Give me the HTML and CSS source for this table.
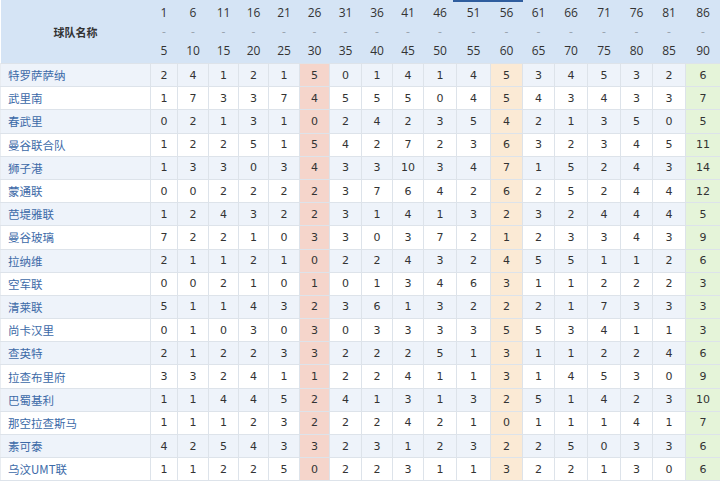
FILE: index.html
```html
<!DOCTYPE html>
<html lang="zh">
<head>
<meta charset="utf-8">
<link rel="stylesheet" href="styles.css">
</head>
<body>
<div class="wrap">
<div class="topbar"></div>
<table class="grid">
<colgroup>
<col class="c-name"><col style="width:27px"><col style="width:31px"><col style="width:30px"><col style="width:30px"><col style="width:31px"><col style="width:30px"><col style="width:32px"><col style="width:31px"><col style="width:31px"><col style="width:33px"><col style="width:34px"><col style="width:32px"><col style="width:32px"><col style="width:33px"><col style="width:33px"><col style="width:32px"><col style="width:33px"><col style="width:35px">
</colgroup>
<thead>
<tr>
<th class="hname">球队名称</th>
<th><span>1</span><i>-</i><span>5</span></th>
<th><span>6</span><i>-</i><span>10</span></th>
<th><span>11</span><i>-</i><span>15</span></th>
<th><span>16</span><i>-</i><span>20</span></th>
<th><span>21</span><i>-</i><span>25</span></th>
<th><span>26</span><i>-</i><span>30</span></th>
<th><span>31</span><i>-</i><span>35</span></th>
<th><span>36</span><i>-</i><span>40</span></th>
<th><span>41</span><i>-</i><span>45</span></th>
<th><span>46</span><i>-</i><span>50</span></th>
<th><span>51</span><i>-</i><span>55</span></th>
<th><span>56</span><i>-</i><span>60</span></th>
<th><span>61</span><i>-</i><span>65</span></th>
<th><span>66</span><i>-</i><span>70</span></th>
<th><span>71</span><i>-</i><span>75</span></th>
<th><span>76</span><i>-</i><span>80</span></th>
<th><span>81</span><i>-</i><span>85</span></th>
<th><span>86</span><i>-</i><span>90</span></th>
</tr>
</thead>
<tbody>
<tr><td class="name">特罗萨萨纳</td><td>2</td><td>4</td><td>1</td><td>2</td><td>1</td><td class="pk">5</td><td>0</td><td>1</td><td>4</td><td>1</td><td>4</td><td class="pc">5</td><td>3</td><td>4</td><td>5</td><td>3</td><td>2</td><td class="gr">6</td></tr>
<tr><td class="name">武里南</td><td>1</td><td>7</td><td>3</td><td>3</td><td>7</td><td class="pk">4</td><td>5</td><td>5</td><td>5</td><td>0</td><td>4</td><td class="pc">5</td><td>4</td><td>3</td><td>4</td><td>3</td><td>3</td><td class="gr">7</td></tr>
<tr><td class="name">春武里</td><td>0</td><td>2</td><td>1</td><td>3</td><td>1</td><td class="pk">0</td><td>2</td><td>4</td><td>2</td><td>3</td><td>5</td><td class="pc">4</td><td>2</td><td>1</td><td>3</td><td>5</td><td>0</td><td class="gr">5</td></tr>
<tr><td class="name">曼谷联合队</td><td>1</td><td>2</td><td>2</td><td>5</td><td>1</td><td class="pk">5</td><td>4</td><td>2</td><td>7</td><td>2</td><td>3</td><td class="pc">6</td><td>3</td><td>2</td><td>3</td><td>4</td><td>5</td><td class="gr">11</td></tr>
<tr><td class="name">狮子港</td><td>1</td><td>3</td><td>3</td><td>0</td><td>3</td><td class="pk">4</td><td>3</td><td>3</td><td>10</td><td>3</td><td>4</td><td class="pc">7</td><td>1</td><td>5</td><td>2</td><td>4</td><td>3</td><td class="gr">14</td></tr>
<tr><td class="name">蒙通联</td><td>0</td><td>0</td><td>2</td><td>2</td><td>2</td><td class="pk">2</td><td>3</td><td>7</td><td>6</td><td>4</td><td>2</td><td class="pc">6</td><td>2</td><td>5</td><td>2</td><td>4</td><td>4</td><td class="gr">12</td></tr>
<tr><td class="name">芭堤雅联</td><td>1</td><td>2</td><td>4</td><td>3</td><td>2</td><td class="pk">2</td><td>3</td><td>1</td><td>4</td><td>1</td><td>3</td><td class="pc">2</td><td>3</td><td>2</td><td>4</td><td>4</td><td>4</td><td class="gr">5</td></tr>
<tr><td class="name">曼谷玻璃</td><td>7</td><td>2</td><td>2</td><td>1</td><td>0</td><td class="pk">3</td><td>3</td><td>0</td><td>3</td><td>7</td><td>2</td><td class="pc">1</td><td>2</td><td>3</td><td>3</td><td>4</td><td>3</td><td class="gr">9</td></tr>
<tr><td class="name">拉纳维</td><td>2</td><td>1</td><td>1</td><td>2</td><td>1</td><td class="pk">0</td><td>2</td><td>2</td><td>4</td><td>3</td><td>2</td><td class="pc">4</td><td>5</td><td>5</td><td>1</td><td>1</td><td>2</td><td class="gr">6</td></tr>
<tr><td class="name">空军联</td><td>0</td><td>0</td><td>2</td><td>1</td><td>0</td><td class="pk">1</td><td>0</td><td>1</td><td>3</td><td>4</td><td>6</td><td class="pc">3</td><td>1</td><td>1</td><td>2</td><td>2</td><td>2</td><td class="gr">3</td></tr>
<tr><td class="name">清莱联</td><td>5</td><td>1</td><td>1</td><td>4</td><td>3</td><td class="pk">2</td><td>3</td><td>6</td><td>1</td><td>3</td><td>2</td><td class="pc">2</td><td>2</td><td>1</td><td>7</td><td>3</td><td>3</td><td class="gr">3</td></tr>
<tr><td class="name">尚卡汉里</td><td>0</td><td>1</td><td>0</td><td>3</td><td>0</td><td class="pk">3</td><td>0</td><td>3</td><td>3</td><td>3</td><td>3</td><td class="pc">5</td><td>5</td><td>3</td><td>4</td><td>1</td><td>1</td><td class="gr">3</td></tr>
<tr><td class="name">查英特</td><td>2</td><td>1</td><td>2</td><td>2</td><td>3</td><td class="pk">3</td><td>2</td><td>2</td><td>2</td><td>5</td><td>1</td><td class="pc">3</td><td>1</td><td>1</td><td>2</td><td>2</td><td>4</td><td class="gr">6</td></tr>
<tr><td class="name">拉查布里府</td><td>3</td><td>3</td><td>2</td><td>4</td><td>1</td><td class="pk">1</td><td>2</td><td>2</td><td>4</td><td>1</td><td>1</td><td class="pc">3</td><td>1</td><td>4</td><td>5</td><td>3</td><td>0</td><td class="gr">9</td></tr>
<tr><td class="name">巴蜀基利</td><td>1</td><td>1</td><td>4</td><td>4</td><td>5</td><td class="pk">2</td><td>4</td><td>1</td><td>3</td><td>1</td><td>3</td><td class="pc">2</td><td>5</td><td>1</td><td>4</td><td>2</td><td>3</td><td class="gr">10</td></tr>
<tr><td class="name">那空拉查斯马</td><td>1</td><td>1</td><td>1</td><td>2</td><td>3</td><td class="pk">2</td><td>2</td><td>2</td><td>4</td><td>2</td><td>1</td><td class="pc">0</td><td>1</td><td>1</td><td>1</td><td>4</td><td>1</td><td class="gr">7</td></tr>
<tr><td class="name">素可泰</td><td>4</td><td>2</td><td>5</td><td>4</td><td>3</td><td class="pk">3</td><td>2</td><td>3</td><td>1</td><td>2</td><td>3</td><td class="pc">2</td><td>2</td><td>5</td><td>0</td><td>3</td><td>3</td><td class="gr">6</td></tr>
<tr><td class="name">乌汶UMT联</td><td>1</td><td>1</td><td>2</td><td>2</td><td>5</td><td class="pk">0</td><td>2</td><td>2</td><td>3</td><td>1</td><td>1</td><td class="pc">3</td><td>2</td><td>2</td><td>1</td><td>3</td><td>0</td><td class="gr">6</td></tr>
</tbody>
</table>
</div>
</body>
</html>
```
FILE: styles.css
```css
html, body {
  margin: 0;
  padding: 0;
  background: #ffffff;
}
.wrap {
  position: relative;
  width: 720px;
}
.topbar {
  position: absolute;
  left: 453px;
  top: 0;
  width: 70px;
  height: 2px;
  background: #2f5d9e;
}
.grid {
  width: 720px;
  border-collapse: collapse;
  table-layout: fixed;
  font-family: "DejaVu Sans", Verdana, sans-serif;
  font-size: 11px;
  color: #333333;
}
.c-name {
  width: 150px;
}
.grid thead th {
  background: #d5e4f5;
  height: 63px;
  padding: 0;
  font-weight: normal;
  font-family: "Open Sans", "Noto Sans", sans-serif;
  font-size: 12px;
  color: #333333;
  vertical-align: middle;
}
.grid thead th span,
.grid thead th i {
  display: block;
  line-height: 19px;
  font-style: normal;
}
.grid thead th i {
  color: #9aa4b0;
}
.grid thead th.hname {
  font-family: "Noto Sans CJK SC", sans-serif;
  font-weight: bold;
  font-size: 11px;
  color: #333333;
}
.grid tbody td {
  height: 22.2px;
  padding: 0;
  text-align: center;
  border: 1px solid #dde3ea;
}
.grid tbody tr:nth-child(odd) td {
  background: #eef3fa;
}
.grid tbody tr:nth-child(even) td {
  background: #ffffff;
}
.grid tbody td.name {
  text-align: left;
  padding-left: 7px;
  font-family: "Noto Sans CJK SC", sans-serif;
  font-size: 11.5px;
  color: #3c6aa8;
  border-left-color: #e8ecf1;
}
.grid tbody tr td.pk {
  background: #f5d5cb;
}
.grid tbody tr td.pc {
  background: #fbead5;
}
.grid tbody tr td.gr {
  background: #e5f4d9;
}
```
